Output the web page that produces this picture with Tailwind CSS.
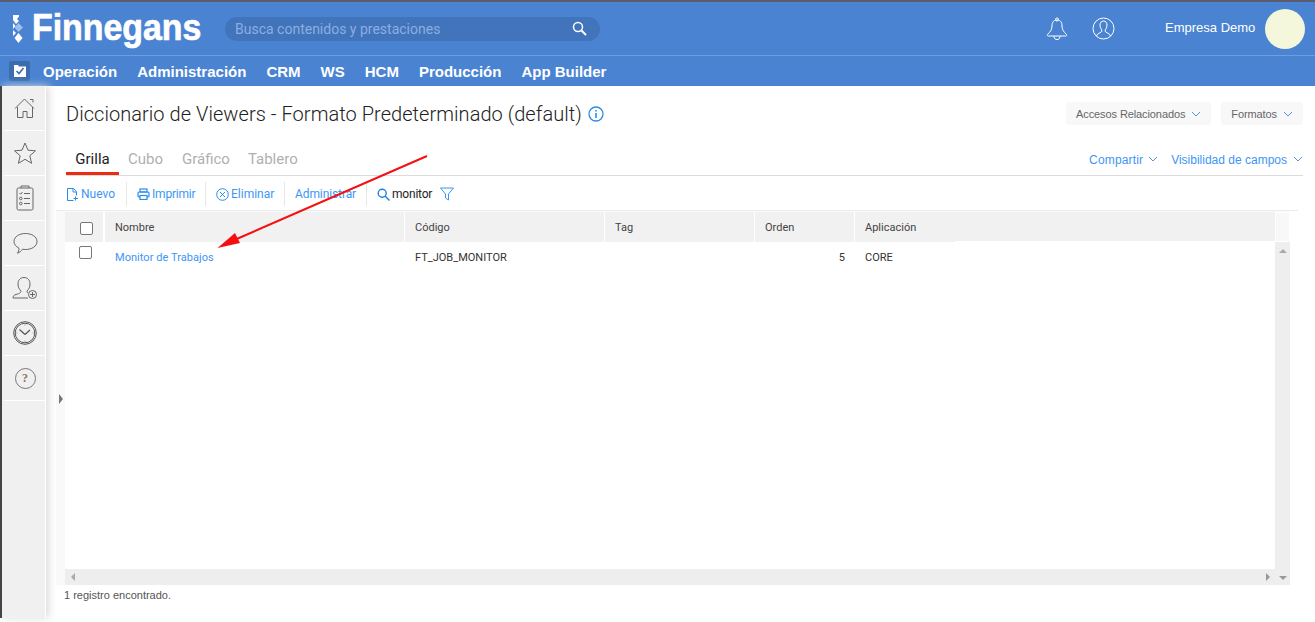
<!DOCTYPE html>
<html lang="en">
<head>
  <meta charset="UTF-8">
  <title>Diccionario de Viewers</title>
  <script src="https://cdn.jsdelivr.net/npm/@tailwindcss/browser@4"></script>
</head>
<body class="bg-white overflow-hidden font-['Roboto',sans-serif]">
<div class="relative w-[1315px] h-[622px] overflow-hidden">
  <!-- header -->
  <header class="h-[86px] bg-[#4a83d2] border-t-2 border-[#5b5b6e]">
    <div class="h-[53px] flex items-center border-b border-[#6f9de0] box-content">
      <svg class="ml-[13px] w-[10px] h-[28px]" viewBox="0 0 10 28"><path d="M0 0h6v1.500l-2 2.500L6 6 3 9 0 5z" fill="#fff"/><path d="M0 8l2.500 3L0 14z" fill="#fff"/><path d="M5.500 8l4.500 4.500L5.500 17 1.500 12.500z" fill="#9dbfec"/><path d="M0 15l3 3-3 3z" fill="#fff"/><path d="M5.500 18l4 5-4 5-4-5z" fill="#fff"/></svg>
      <span class="block ml-[9px] mt-[-2px] text-[36px] leading-none font-bold text-white font-['Liberation_Sans',sans-serif] [-webkit-text-stroke:0.7px_white] origin-left scale-x-[0.94] w-[169px] whitespace-nowrap">Finnegans</span>
      <div class="ml-6 w-[375px] h-6 rounded-full bg-[#4274bb] flex items-center justify-between pl-[10px] pr-[13px]">
        <span class="text-[14px] text-[#8aaee0] pt-px">Busca contenidos y prestaciones</span>
        <svg class="w-[15px] h-[15px]" viewBox="0 0 15 15" fill="none" stroke="#fff"><circle cx="6" cy="6" r="4.500" stroke-width="1.500"/><path d="M9.500 9.500l4.500 4.500" stroke-width="2"/></svg>
      </div>
      <svg class="ml-[446px] w-[22px] h-[24px]" viewBox="0 0 22 24" fill="none" stroke="#fff" stroke-width="1"><path d="M11 3c-4 0-5 3-5 6 0 4-2 6-4.500 8.500-.5 1 0 1.500 1 1.500h17c1 0 1.500-.5 1-1.500C18 15 16 13 16 9c0-3-1-6-5-6z"/><circle cx="11" cy="2.500" r="1.500"/><path d="M8 19c0 3 1.500 3.500 3 3.500s3-.5 3-3.500"/></svg>
      <svg class="ml-6 w-[23px] h-[23px]" viewBox="0 0 23 23" fill="none" stroke="#fff" stroke-width="1"><circle cx="11.500" cy="11.500" r="10.500"/><path d="M4.500 19c.5-3 5-3 5.500-5 .2-1-2-2.500-2-6 0-2.500 1.500-4 3.500-4s3.500 1.500 3.500 4c0 3.500-2.200 5-2 6 .5 2 5 2 5.500 5"/></svg>
      <span class="ml-[50px] mt-[-2px] text-[13px] text-white font-['Liberation_Sans',sans-serif] w-[100px] whitespace-nowrap">Empresa Demo</span>
      <div class="w-10 h-10 rounded-full bg-[#f4f7dc]"></div>
    </div>
    <nav class="h-[30px] flex items-center pl-[9px] text-[15px] font-bold text-white font-['Liberation_Sans',sans-serif]">
      <div class="w-[21px] h-[20px] rounded-[2px] bg-[#3d6cae] flex items-center justify-center mr-[13px]">
        <svg class="w-[12px] h-[12px]" viewBox="0 0 12 12"><path d="M0 0h4l1 1.500h7V12H0z" fill="#fff"/><path d="M2.500 6l2.500 2.500L9.500 3" fill="none" stroke="#3d6cae" stroke-width="1.600"/></svg>
      </div>
      <span class="pt-[2px]">Operación</span>
      <span class="ml-[20px] pt-[2px]">Administración</span>
      <span class="ml-[20px] pt-[2px]">CRM</span>
      <span class="ml-[20px] pt-[2px]">WS</span>
      <span class="ml-[20px] pt-[2px]">HCM</span>
      <span class="ml-[20px] pt-[2px]">Producción</span>
      <span class="ml-[20px] pt-[2px]">App Builder</span>
    </nav>
  </header>

  <div class="flex h-[533px]">
    <!-- sidebar -->
    <aside class="relative w-[46px] h-[532px] bg-[#f0f0f0] border-l-2 border-[#444444] shadow-[3px_0_8px_#dddddd] shrink-0 pl-[2px]">
      <div class="h-[45px] flex items-center justify-center border-b border-white">
        <svg class="w-[22px] h-[22px]" viewBox="0 0 22 22" fill="none" stroke="#666" stroke-width="1"><path d="M1 11.500L10.500 2l9.500 9.500M3.500 10v10.500h5.500v-6h4v6h5.500V10M16 2.500h3v3" /></svg>
      </div>
      <div class="h-[45px] flex items-center justify-center border-b border-white">
        <svg class="w-[24px] h-[24px]" viewBox="0 0 24 24" fill="none" stroke="#666" stroke-width="1"><path d="M12 2l3 7.200 7.500.6-5.700 5 1.800 7.500L12 18.300l-6.600 4 1.800-7.500-5.700-5L9 9.200z"/></svg>
      </div>
      <div class="h-[45px] flex items-center justify-center border-b border-white">
        <svg class="w-[20px] h-[26px]" viewBox="0 0 20 26" fill="none" stroke="#666" stroke-width="1"><rect x="2" y="3" width="16" height="22" rx="1.500"/><path d="M6 3V1h8v2M9 8.500h6M9 13.500h6M9 18.500h6" /><path d="M4.500 8l1.200 1.200L7.500 7"/><circle cx="5.800" cy="13.500" r="1.300"/><circle cx="5.800" cy="18.500" r="1.300"/></svg>
      </div>
      <div class="h-[45px] flex items-center justify-center border-b border-white">
        <svg class="w-[25px] h-[23px]" viewBox="0 0 25 23" fill="none" stroke="#666" stroke-width="1"><path d="M12.500 1.500c6 0 11.500 3 11.500 8s-5.500 8-11.500 8c-1 0-2 0-3-.3-1 1.500-3 3.500-5 4 1-1.500 1.500-3 1.500-5C3 14.500 1 12.500 1 9.500c0-5 5.500-8 11.500-8z"/></svg>
      </div>
      <div class="h-[45px] flex items-center justify-center border-b border-white">
        <svg class="w-[26px] h-[24px]" viewBox="0 0 26 24" fill="none" stroke="#666" stroke-width="1"><path d="M1 22c0-2 1-3 3-3.500 4-1 5-2 5-3.500-2-2-3-4-3-7 0-4 2.500-6.500 6-6.500s6 2.500 6 6.500c0 3-1 5-3 7 0 1 .3 1.800 1 2.300M1 22h15"/><circle cx="20.500" cy="18.500" r="4"/><path d="M20.500 16v5M18 18.500h5"/></svg>
      </div>
      <div class="h-[45px] flex items-center justify-center border-b border-white">
        <svg class="w-[24px] h-[24px]" viewBox="0 0 24 24" fill="none" stroke="#555" stroke-width="1"><circle cx="12" cy="12" r="11.300"/><circle cx="12" cy="12" r="9.800"/><path d="M12 13.500L6.500 8.500M12 13.500L17 9" stroke-width="1.200"/><path d="M12 3v1.500M12 19.500V21M3 12h1.500M19.500 12H21" stroke="#aaa"/></svg>
      </div>
      <div class="h-[45px] flex items-center justify-center border-b border-white">
        <div class="w-[21px] h-[21px] rounded-full border border-[#777] flex items-center justify-center text-[12px] font-bold text-[#8a7a60] font-['Liberation_Serif',serif]">?</div>
      </div>
      <div class="absolute right-0 bottom-0 top-0 w-px bg-white"></div>
    </aside>

    <!-- main -->
    <main class="relative flex-1 pl-[10px] pr-3">
      <div class="h-[57px] flex items-center pl-[10px] pb-[2px]">
        <h1 class="text-[20px] text-[#222] font-light tracking-[0.05px] whitespace-nowrap">Diccionario de Viewers - Formato Predeterminado (default)</h1>
        <svg class="ml-[6px] w-[16px] h-[16px]" viewBox="0 0 16 16" fill="none" stroke="#2a8ce8"><circle cx="8" cy="8" r="7" stroke-width="1.300"/><path d="M8 7v5" stroke-width="1.600"/><path d="M8 4v1.600" stroke-width="1.600"/></svg>
        <div class="ml-auto h-[23px] px-[10px] pt-px flex items-center rounded-[3px] bg-[#f8f8f8] text-[11px] text-[#666] font-['Liberation_Sans',sans-serif] tracking-[-0.1px] whitespace-nowrap">
          Accesos Relacionados
          <svg class="ml-[6px] w-[10px] h-[6px]" viewBox="0 0 10 6" fill="none" stroke="#5b93d8"><path d="M1 1l4 4 4-4"/></svg>
        </div>
        <div class="ml-[10px] h-[23px] px-[10px] pt-px flex items-center rounded-[3px] bg-[#f8f8f8] text-[11px] text-[#666] font-['Liberation_Sans',sans-serif] tracking-[-0.1px] whitespace-nowrap">
          Formatos
          <svg class="ml-[6px] w-[10px] h-[6px]" viewBox="0 0 10 6" fill="none" stroke="#5b93d8"><path d="M1 1l4 4 4-4"/></svg>
        </div>
      </div>

      <!-- tabs -->
      <div class="h-[33px] flex items-stretch border-b border-[#dcdcdc] ml-[10px] text-[15px] text-[#b0b0b0]">
        <div class="w-[53px] text-center text-[#222] pt-[5px] border-b-[3px] border-[#ee2a10] h-[32px]">Grilla</div>
        <div class="ml-[9px] pt-[5px]">Cubo</div>
        <div class="ml-[19px] pt-[5px]">Gráfico</div>
        <div class="ml-[18px] pt-[5px]">Tablero</div>
        <div class="ml-auto pt-[8px] text-[12px] text-[#3d96f5] flex items-start font-['Liberation_Sans',sans-serif]">
          <span class="tracking-[0.15px]">Compartir</span>
          <svg class="ml-[5px] mt-[5px] w-[10px] h-[6px]" viewBox="0 0 10 6" fill="none" stroke="#5b93d8"><path d="M1 1l4 4 4-4"/></svg>
          <span class="ml-[13px]">Visibilidad de campos</span>
          <svg class="ml-[6px] mt-[5px] w-[10px] h-[6px]" viewBox="0 0 10 6" fill="none" stroke="#5b93d8"><path d="M1 1l4 4 4-4"/></svg>
        </div>
      </div>

      <!-- toolbar -->
      <div class="h-[35px] flex items-center text-[12px] text-[#3d96f5] pl-[10px] pt-[2px] border-b border-[#ececec] mr-[5px]">
        <svg class="w-[13px] h-[13px] mr-[2px]" viewBox="0 0 13 13" fill="none" stroke="#2a8ce8"><path d="M7.500 12.500H1.500V.5h6l3 3v4M7 .5v3.500h3.500M9.500 8.500v4M7.500 10.500h4.500"/></svg>
        <span class="w-[35px]">Nuevo</span>
        <div class="w-px h-6 bg-[#e6e6e6] ml-[10px] mr-[10px]"></div>
        <svg class="w-[13px] h-[12px] mr-[2px]" viewBox="0 0 13 12" fill="none" stroke="#2a8ce8" stroke-width="1.200"><rect x="3" y="1" width="7" height="3"/><rect x="1" y="4" width="11" height="5" rx="1"/><rect x="3" y="7.500" width="7" height="4" fill="#fff"/></svg>
        <span class="w-[43px] tracking-[-0.2px]">Imprimir</span>
        <div class="w-px h-6 bg-[#e6e6e6] ml-[10px] mr-[10px]"></div>
        <svg class="w-[13px] h-[13px] mr-[2px]" viewBox="0 0 13 13" fill="none" stroke="#2a8ce8"><circle cx="6.500" cy="6.500" r="5.800"/><path d="M4 4l5 5M9 4l-5 5"/></svg>
        <span class="w-[43px]">Eliminar</span>
        <div class="w-px h-6 bg-[#e6e6e6] ml-[10px] mr-[10px]"></div>
        <span class="w-[61px] tracking-[-0.1px]">Administrar</span>
        <div class="w-px h-6 bg-[#e6e6e6] ml-[10px] mr-[10px]"></div>
        <svg class="w-[13px] h-[13px] mr-[2px]" viewBox="0 0 13 13" fill="none" stroke="#1f7fe0" stroke-width="1.400"><circle cx="5.200" cy="5.200" r="4"/><path d="M8 8l4.500 4.500"/></svg>
        <span class="text-[#222] w-[40px] tracking-[-0.2px]">monitor</span>
        <svg class="ml-[8px] w-[14px] h-[14px]" viewBox="0 0 14 14" fill="none" stroke="#3d96f5"><path d="M.5 1h13L8.500 7v6l-3-2V7z"/></svg>
      </div>

      <!-- grid -->
      <div class="relative bg-[#f9f9f9] pl-[9px] pt-px h-[374px] mr-[13px]">
        <div class="w-[1225px] h-[373px] bg-white flex flex-col">
          <div class="h-[30px] flex text-[11px] text-[#444] bg-[#f1f1f1] shrink-0">
            <div class="w-[40px] border-r-2 border-white flex items-center justify-center pl-[5px] pt-[2px]">
              <div class="w-[13px] h-[13px] rounded-[2px] border border-[#777] bg-white"></div>
            </div>
            <div class="w-[300px] border-r border-white flex items-center pl-[10px] pt-[3px]">Nombre</div>
            <div class="w-[200px] border-r border-white flex items-center pl-[10px] pt-[3px]">Código</div>
            <div class="w-[150px] border-r border-white flex items-center pl-[10px] pt-[3px]">Tag</div>
            <div class="w-[100px] border-r border-white flex items-center pl-[10px] pt-[3px]">Orden</div>
            <div class="w-[100px] flex items-center pl-[10px] pt-[3px]">Aplicación</div>
            <div class="flex-1 border-b border-white"></div>
            <div class="w-[15px] border border-white bg-[#f8f8f8]"></div>
          </div>
          <div class="flex-1 flex min-h-0">
            <div class="flex-1 flex flex-col">
              <div class="flex-1 flex text-[11px] text-[#333]">
                <div class="w-[40px] flex justify-center pt-[4px]">
                  <div class="w-[13px] h-[13px] rounded-[2px] border border-[#777] bg-white"></div>
                </div>
                <div class="w-[300px] pl-[10px] pt-[8px] text-[#3d96f5] tracking-[0.05px]">Monitor de Trabajos</div>
                <div class="w-[200px] pl-[10px] pt-[8px]">FT_JOB_MONITOR</div>
                <div class="w-[150px]"></div>
                <div class="w-[100px] pr-[10px] pt-[8px] text-right">5</div>
                <div class="w-[100px] pl-[10px] pt-[8px]">CORE</div>
              </div>
              <div class="h-4 bg-[#eeeeee] flex items-center justify-between pl-[6px] pr-[5px]">
                <div class="w-0 h-0 border-y-[4px] border-y-transparent border-r-[4px] border-r-[#aaa]"></div>
                <div class="w-0 h-0 border-y-[4px] border-y-transparent border-l-[4px] border-l-[#999]"></div>
              </div>
            </div>
            <div class="w-[15px] bg-[#eeeeee] flex flex-col items-center justify-between pt-[7px] pb-[5px]">
              <div class="w-0 h-0 border-x-[4px] border-x-transparent border-b-[4px] border-b-[#aaa]"></div>
              <div class="w-0 h-0 border-x-[4px] border-x-transparent border-t-[4px] border-t-[#999]"></div>
            </div>
          </div>
        </div>
      </div>

      <p class="pl-[8px] pt-[2px] text-[11px] text-[#555] font-['Liberation_Sans',sans-serif]">1 registro encontrado.</p>

      <!-- sidebar toggle -->
      <div class="absolute left-[13px] top-[308px] w-0 h-0 border-y-[5px] border-y-transparent border-l-[4px] border-l-[#777]"></div>
    </main>
  </div>

  <!-- annotation arrow -->
  <svg class="absolute left-0 top-0 pointer-events-none" width="1315" height="622" viewBox="0 0 1315 622">
    <path d="M427 156L232 241" stroke="#f50f10" stroke-width="2" fill="none"/>
    <path d="M217.500 248L235 233 240 243z" fill="#f50f10"/>
  </svg>
</div>
</body>
</html>
